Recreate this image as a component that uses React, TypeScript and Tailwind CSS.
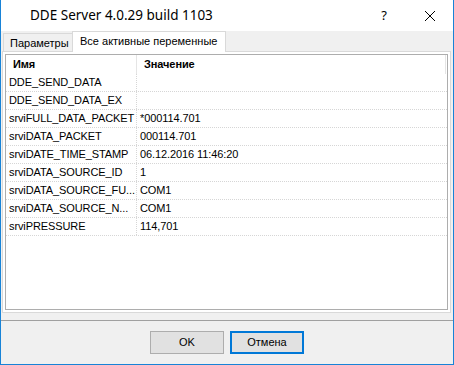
const rows: [string, string][] = [
  ["DDE_SEND_DATA", ""],
  ["DDE_SEND_DATA_EX", ""],
  ["srviFULL_DATA_PACKET", "*000114.701"],
  ["srviDATA_PACKET", "000114.701"],
  ["srviDATE_TIME_STAMP", "06.12.2016 11:46:20"],
  ["srviDATA_SOURCE_ID", "1"],
  ["srviDATA_SOURCE_FU...", "COM1"],
  ["srviDATA_SOURCE_N...", "COM1"],
  ["srviPRESSURE", "114,701"],
];

export default function App() {
  return (
    <div className="w-[454px] h-[365px] flex flex-col border-x border-b border-[#1883d7] bg-[#f0f0f0] overflow-hidden text-black">
      {/* Title bar */}
      <div className="h-[31px] shrink-0 bg-white flex items-center font-['Noto_Sans',sans-serif] text-[13.5px]">
        <span className="ml-[29px] whitespace-nowrap">DDE Server 4.0.29 build 1103</span>
        <div className="ml-auto w-[46px] h-[31px] flex items-center justify-center text-[13px]">?</div>
        <div className="w-[46px] h-[31px] flex items-center justify-center">
          <svg width="10" height="10" viewBox="0 0 10 10">
            <path d="M0 0 L10 10 M10 0 L0 10" stroke="#000" strokeWidth="1" fill="none" />
          </svg>
        </div>
      </div>

      {/* Tabs */}
      <div className="h-[21px] shrink-0 flex items-end ml-[2px] font-['Liberation_Sans',sans-serif] text-[11px]">
        <div className="h-[19px] w-[69px] border-l border-t border-[#d9d9d9] bg-[#f0f0f0] flex items-center pl-[6px] whitespace-nowrap overflow-hidden">
          Параметры
        </div>
        <div className="relative z-10 h-[21px] w-[154px] border-l border-t border-r border-[#d9d9d9] bg-white flex items-center pl-[7px] pb-[2px] whitespace-nowrap">
          Все активные переменные
        </div>
      </div>

      {/* Panel */}
      <div className="-mt-px ml-[1px] w-[449px] h-[262px] shrink-0 border border-[#d9d9d9] bg-white p-[2px]">
        <div className="h-full border border-[#adadad] bg-white font-['Liberation_Sans',sans-serif] text-[11px] tracking-[-0.1px]">
          {/* Header */}
          <div className="h-[19px] flex items-center font-bold">
            <div className="w-[131px] h-full flex items-center pl-[7px] border-r border-[#e5e5e5]">Имя</div>
            <div className="w-[309px] h-full flex items-center pl-[7px] border-r border-[#e5e5e5]">Значение</div>
          </div>
          {rows.map(([n, v]) => (
            <div key={n} className="h-[18px] flex border-b border-dotted border-[#d6d6d6]">
              <div className="w-[131px] h-full flex items-center pl-[3px] border-r border-dotted border-[#d6d6d6] whitespace-nowrap overflow-hidden">
                {n}
              </div>
              <div className="flex-1 h-full flex items-center pl-[3px] whitespace-nowrap">{v}</div>
            </div>
          ))}
        </div>
      </div>

      {/* Separator */}
      <div className="mt-[7px] h-px shrink-0 bg-[#a0a0a0]" />

      {/* Buttons */}
      <div className="mt-[10px] flex justify-center gap-[6px] font-['Liberation_Sans',sans-serif] text-[11px]">
        <button className="w-[74px] h-[23px] border border-[#adadad] bg-[#e1e1e1] flex items-center justify-center">
          OK
        </button>
        <button className="w-[74px] h-[23px] border-2 border-[#0078d7] bg-[#e1e1e1] flex items-center justify-center">
          Отмена
        </button>
      </div>
    </div>
  );
}
